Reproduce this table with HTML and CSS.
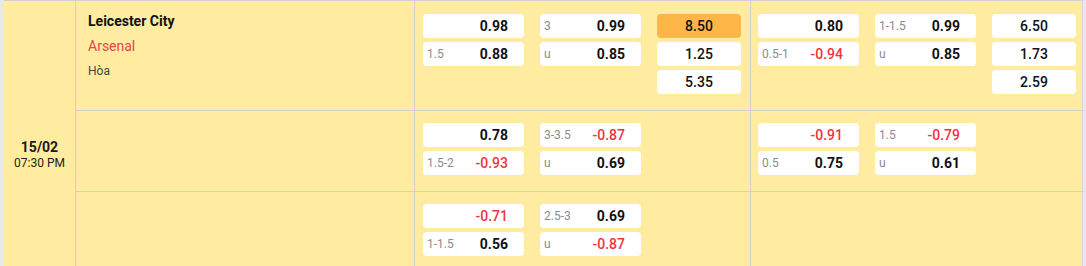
FILE: index.html
```html
<!DOCTYPE html>
<html lang="vi">
<head>
<meta charset="utf-8">
<title>Odds</title>
<link rel="stylesheet" href="styles.css">
</head>
<body>
<div class="match">
  <div class="date">
    <div class="day">15/02</div>
    <div class="time">07:30 PM</div>
  </div>
  <div class="rows">
    <div class="row first">
      <div class="teams">
        <div class="home">Leicester City</div>
        <div class="away">Arsenal</div>
        <div class="draw">Hòa</div>
      </div>
      <div class="market">
        <div class="odd"><span class="lbl"></span><span class="val">0.98</span></div>
        <div class="odd"><span class="lbl">3</span><span class="val">0.99</span></div>
        <div class="odd center hot"><span class="val">8.50</span></div>
        <div class="odd"><span class="lbl">1.5</span><span class="val">0.88</span></div>
        <div class="odd"><span class="lbl">u</span><span class="val">0.85</span></div>
        <div class="odd center"><span class="val">1.25</span></div>
        <div class="empty"></div>
        <div class="empty"></div>
        <div class="odd center"><span class="val">5.35</span></div>
      </div>
      <div class="market last">
        <div class="odd"><span class="lbl"></span><span class="val">0.80</span></div>
        <div class="odd"><span class="lbl">1-1.5</span><span class="val">0.99</span></div>
        <div class="odd center"><span class="val">6.50</span></div>
        <div class="odd"><span class="lbl">0.5-1</span><span class="val neg">-0.94</span></div>
        <div class="odd"><span class="lbl">u</span><span class="val">0.85</span></div>
        <div class="odd center"><span class="val">1.73</span></div>
        <div class="empty"></div>
        <div class="empty"></div>
        <div class="odd center"><span class="val">2.59</span></div>
      </div>
    </div>
    <div class="row">
      <div class="teams"></div>
      <div class="market">
        <div class="odd"><span class="lbl"></span><span class="val">0.78</span></div>
        <div class="odd"><span class="lbl">3-3.5</span><span class="val neg">-0.87</span></div>
        <div class="empty"></div>
        <div class="odd"><span class="lbl">1.5-2</span><span class="val neg">-0.93</span></div>
        <div class="odd"><span class="lbl">u</span><span class="val">0.69</span></div>
        <div class="empty"></div>
      </div>
      <div class="market last">
        <div class="odd"><span class="lbl"></span><span class="val neg">-0.91</span></div>
        <div class="odd"><span class="lbl">1.5</span><span class="val neg">-0.79</span></div>
        <div class="empty"></div>
        <div class="odd"><span class="lbl">0.5</span><span class="val">0.75</span></div>
        <div class="odd"><span class="lbl">u</span><span class="val">0.61</span></div>
        <div class="empty"></div>
      </div>
    </div>
    <div class="row">
      <div class="teams"></div>
      <div class="market">
        <div class="odd"><span class="lbl"></span><span class="val neg">-0.71</span></div>
        <div class="odd"><span class="lbl">2.5-3</span><span class="val">0.69</span></div>
        <div class="empty"></div>
        <div class="odd"><span class="lbl">1-1.5</span><span class="val">0.56</span></div>
        <div class="odd"><span class="lbl">u</span><span class="val neg">-0.87</span></div>
        <div class="empty"></div>
      </div>
      <div class="market last"></div>
    </div>
  </div>
</div>
</body>
</html>
```
FILE: styles.css
```css
* { box-sizing: border-box; }
html, body { margin: 0; padding: 0; }
body {
  background: #e8e8e8;
  font-family: Roboto, "Liberation Sans", sans-serif;
  color: #111;
}
.match {
  display: flex;
  margin-left: 4px;
  width: 1079px;
  background: #ffeca1;
  border-top: 1px solid #cfcfcf;
  border-right: 1px solid #d6d6d6;
}
.date {
  width: 72px;
  flex: none;
  border-right: 1px solid #cfcfcf;
  padding-top: 138px;
  text-align: center;
}
.day { font-size: 14px; font-weight: 700; line-height: 16px; color: #1a1a1a; }
.time { font-size: 12px; line-height: 16px; color: #222; }
.rows { flex: 1; display: flex; flex-direction: column; }
.row {
  display: flex;
  border-bottom: 1px solid #cfcfcf;
}
.teams {
  width: 339px;
  flex: none;
  border-right: 1px solid #cfcfcf;
  padding: 8px 12px 0;
}
.home, .away, .draw { line-height: 25px; }
.home { font-size: 14px; font-weight: 700; color: #111; }
.away { font-size: 14px; color: #e2464a; }
.draw { font-size: 12px; color: #444; }
.market {
  width: 336px;
  flex: none;
  border-right: 1px solid #cfcfcf;
  padding: 12px 8px 16px;
  display: grid;
  grid-template-columns: 101px 101px 84px;
  grid-auto-rows: 24px;
  column-gap: 16px;
  row-gap: 4px;
  align-content: start;
}
.row.first .market { padding-top: 13px; }
.market.last { flex: 1; width: auto; border-right: none; padding-left: 7px; }
.odd {
  background: #fff;
  border-radius: 4px;
  display: flex;
  align-items: center;
  justify-content: space-between;
  padding: 0 16px 0 4px;
}
.odd.center { justify-content: center; padding: 0; }
.odd.hot { background: #ffb649; }
.odd.hot .val { font-weight: 500; }
.lbl { font-size: 12px; color: #8c8c8c; }
.val { font-size: 14px; font-weight: 700; color: #111; }
.odd.center .val { font-weight: 500; }
.val.neg { color: #f2333d; font-weight: 500; }
```
